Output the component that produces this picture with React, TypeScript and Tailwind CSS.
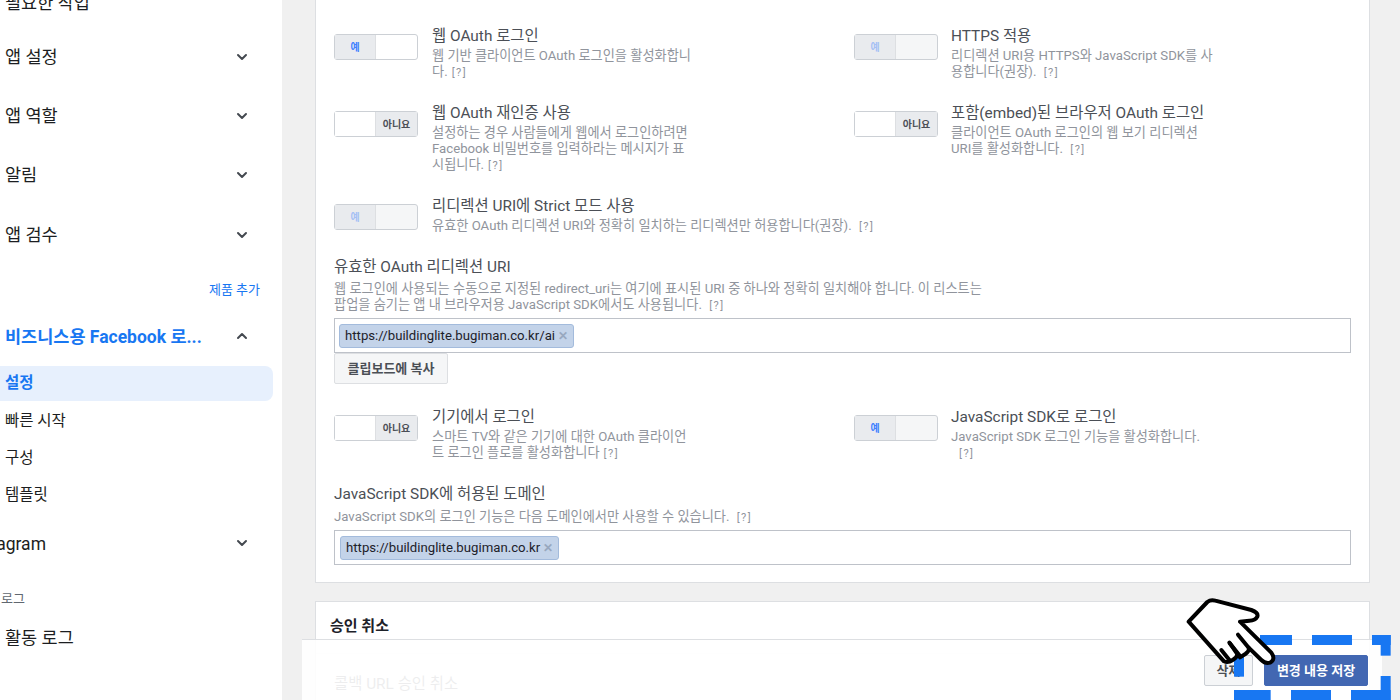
import React from 'react';
import { ChevronDown, ChevronUp } from 'lucide-react';

const font = { fontFamily: 'Roboto, "Noto Sans CJK KR", sans-serif' };

const Help = () => <span className="text-[11px] tracking-[1.5px] text-[#90949c] ml-1">[?]</span>;

const SideRow = ({ label, up, active, h }: { label: string; up?: boolean; active?: boolean; h: string }) => (
  <div className={`flex items-center justify-between pl-[5px] pr-[32px] ${h}`}>
    <span className={active ? 'text-[17.5px] font-bold text-[#1877f2]' : 'text-[17.5px] text-[#1c1e21]'}>{label}</span>
    {up ? (
      <ChevronUp className="w-[16px] h-[16px] mb-[2px] text-[#444950]" strokeWidth={3} />
    ) : (
      <ChevronDown className="w-[16px] h-[16px] mb-[2px] text-[#444950]" strokeWidth={3} />
    )}
  </div>
);

const SubRow = ({ label }: { label: string }) => (
  <div className="h-[37px] flex items-center pl-[5px] text-[15.5px] text-[#1c1e21]">{label}</div>
);

const Toggle = ({ on, disabled, white }: { on: boolean; disabled?: boolean; white?: boolean }) => (
  <div className={`w-[84px] h-[26px] shrink-0 flex border border-[#ccd0d5] rounded-[3px] ${on && !white ? 'bg-[#f5f6f7]' : 'bg-white'}`}>
    {on ? (
      <>
        <div
          className={`w-[41px] flex items-center justify-center text-[10px] font-bold bg-[#e9ebee] border-r border-[#dddfe2] ${
            disabled ? 'text-[#a5c0f5]' : 'text-[#4080ff]'
          }`}
        >
          예
        </div>
        <div className="flex-1" />
      </>
    ) : (
      <>
        <div className="flex-1 bg-white" />
        <div className="w-[42px] flex items-center justify-center text-[10px] font-bold text-[#4b4f56] bg-[#e9ebee] border-l border-[#dddfe2]">
          아니요
        </div>
      </>
    )}
  </div>
);

const Setting = ({
  title,
  on,
  disabled,
  white,
  right,
  children,
  className,
}: {
  title: string;
  on: boolean;
  disabled?: boolean;
  white?: boolean;
  right?: boolean;
  children: React.ReactNode;
  className?: string;
}) => (
  <div className={`flex ${className ?? ''}`}>
    <div className="mt-[8px]">
      <Toggle on={on} disabled={disabled} white={white} />
    </div>
    <div className={`${right ? 'ml-[13px]' : 'ml-[14px]'} whitespace-nowrap`}>
      <div className="text-[15.4px] leading-[18px] text-[#4b4f56] mt-[1px]">{title}</div>
      <div className="text-[13.2px] leading-[16px] text-[#90949c] mt-[3px]">{children}</div>
    </div>
  </div>
);

const Chip = ({ text }: { text: string }) => (
  <span className="inline-flex items-center h-[24px] px-[5px] bg-[#c3d3e9] border border-[#a3bbdc] rounded-[3px] text-[13.2px] text-[#1d2129]">
    {text}
    <span className="ml-[3px] text-[12px] font-bold text-[#98a8bf]">✕</span>
  </span>
);

const App = () => {
  return (
    <div className="h-[700px] w-[1400px] overflow-hidden relative flex bg-[#f0f0f0]" style={font}>
      {/* 사이드바 */}
      <aside className="w-[282px] h-[700px] shrink-0 bg-white overflow-hidden">
        <div className="mt-[-27px]">
          <div className="h-[60px] flex items-center pl-[5px] text-[17.5px] text-[#1c1e21]">필요한 작업</div>
          <SideRow label="앱 설정" h="h-[59px] mt-[-5px]" />
          <SideRow label="앱 역할" h="h-[59px]" />
          <SideRow label="알림" h="h-[59px]" />
          <SideRow label="앱 검수" h="h-[61px]" />
          <div className="h-[32px] mt-[8px] flex items-center justify-end pr-[22px] text-[13px] text-[#1877f2]">제품 추가</div>
          <SideRow label="비즈니스용 Facebook 로..." up active h="h-[46px] mt-[8px]" />
          <div className="h-[35px] mt-[6px] mr-[9px] flex items-center pl-[5px] text-[15.5px] font-bold text-[#1877f2] bg-[#e7f0fd] rounded-r-[8px]">
            설정
          </div>
          <div className="mt-[2px]">
            <SubRow label="빠른 시작" />
            <SubRow label="구성" />
            <SubRow label="템플릿" />
          </div>
          <div className="mt-[5px] h-[50px] flex items-center justify-between pr-[32px]">
            <span className="text-[17.5px] text-[#1c1e21] ml-[-33px]">Instagram</span>
            <ChevronDown className="w-[16px] h-[16px] mb-[2px] text-[#444950]" strokeWidth={3} />
          </div>
          <div className="mt-[22px] h-[16px] flex items-center pl-[1px] text-[13px] text-[#606770]">로그</div>
          <div className="mt-[18px] h-[26px] flex items-center pl-[5px] text-[17.5px] text-[#1c1e21]">활동 로그</div>
        </div>
      </aside>

      {/* 본문 */}
      <main className="flex-1 pl-[33px]">
        <section className="w-[1055px] h-[583px] bg-white border border-t-0 border-[#dddfe2] pl-[18px] pr-[18px] pt-[26px]">
          <div className="grid grid-cols-[520px_1fr]">
            <Setting title="웹 OAuth 로그인" on white className="h-[77px]">
              웹 기반 클라이언트 OAuth 로그인을 활성화합니
              <br />
              다.<Help />
            </Setting>
            <Setting title="HTTPS 적용" on disabled right className="h-[77px]">
              리디렉션 URI용 HTTPS와 JavaScript SDK를 사
              <br />
              용합니다(권장). <Help />
            </Setting>
            <Setting title="웹 OAuth 재인증 사용" on={false} className="h-[93px]">
              설정하는 경우 사람들에게 웹에서 로그인하려면
              <br />
              Facebook 비밀번호를 입력하라는 메시지가 표
              <br />
              시됩니다.<Help />
            </Setting>
            <Setting title="포함(embed)된 브라우저 OAuth 로그인" on={false} right className="h-[93px]">
              클라이언트 OAuth 로그인의 웹 보기 리디렉션
              <br />
              URI를 활성화합니다. <Help />
            </Setting>
          </div>
          <Setting title="리디렉션 URI에 Strict 모드 사용" on disabled className="h-[53px]">
            유효한 OAuth 리디렉션 URI와 정확히 일치하는 리디렉션만 허용합니다(권장). <Help />
          </Setting>

          <div className="text-[15.4px] leading-[18px] text-[#4b4f56] mt-[9px]">유효한 OAuth 리디렉션 URI</div>
          <div className="text-[13.2px] leading-[16px] text-[#90949c] mt-[5px] whitespace-nowrap">
            웹 로그인에 사용되는 수동으로 지정된 redirect_uri는 여기에 표시된 URI 중 하나와 정확히 일치해야 합니다. 이 리스트는
            <br />
            팝업을 숨기는 앱 내 브라우저용 JavaScript SDK에서도 사용됩니다. <Help />
          </div>
          <div className="h-[35px] mt-[4px] border border-[#bec2c9] bg-white flex items-center pl-[4px]">
            <Chip text="https://buildinglite.bugiman.co.kr/ai" />
          </div>
          <button className="block h-[31px] w-[114px] bg-[#f5f6f7] border border-[#dddfe2] rounded-[2px] text-[13px] font-bold text-[#4b4f56]">
            클립보드에 복사
          </button>

          <div className="grid grid-cols-[520px_1fr] mt-[23px]">
            <Setting title="기기에서 로그인" on={false} className="h-[78px]">
              스마트 TV와 같은 기기에 대한 OAuth 클라이언
              <br />
              트 로그인 플로를 활성화합니다<Help />
            </Setting>
            <Setting title="JavaScript SDK로 로그인" on right className="h-[78px]">
              JavaScript SDK 로그인 기능을 활성화합니다.
              <br />
              <span className="ml-[4px]">
                <Help />
              </span>
            </Setting>
          </div>

          <div className="text-[15.4px] leading-[18px] text-[#4b4f56]">JavaScript SDK에 허용된 도메인</div>
          <div className="text-[13.2px] leading-[16px] text-[#90949c] mt-[6px] whitespace-nowrap">
            JavaScript SDK의 로그인 기능은 다음 도메인에서만 사용할 수 있습니다. <Help />
          </div>
          <div className="h-[35px] mt-[4px] border border-[#bec2c9] bg-white flex items-center pl-[5px]">
            <Chip text="https://buildinglite.bugiman.co.kr" />
          </div>
        </section>

        <section className="w-[1055px] h-[200px] mt-[18px] bg-white border border-[#dddfe2] pt-[14px]">
          <div className="pl-[14px] text-[15px] leading-[20px] font-bold text-[#1d2129]">승인 취소</div>
          <div className="mt-[17px] border-t border-[#f0f1f3]" />
          <div className="mt-[19px] pl-[18px] text-[15.4px] text-[#4b4f56]">콜백 URL 승인 취소</div>
        </section>
      </main>

      {/* 하단 저장 바 */}
      <div className="absolute left-[302px] top-[639px] w-[1080px] h-[61px] bg-white/90 border-t border-[#dddfe2] flex justify-end gap-[11px] pt-[15px] pr-[14px]">
        <button className="w-[49px] h-[31px] bg-[#f5f6f7] border border-[#ccd0d5] rounded-[2px] text-[13px] font-bold text-[#4b4f56]">
          삭제
        </button>
        <button className="w-[104px] h-[31px] bg-[#4267b2] border border-[#4267b2] rounded-[2px] text-[13px] font-bold text-white whitespace-nowrap">
          변경 내용 저장
        </button>
      </div>

      {/* 강조 표시 */}
      <svg className="absolute left-[1150px] top-[580px]" width="250" height="120" viewBox="0 0 750 360">
        <g fill="#1877f2">
          <rect x="330" y="165" width="96" height="30" />
          <rect x="486" y="165" width="120" height="30" />
          <rect x="666" y="165" width="56" height="30" />
          <rect x="692" y="165" width="30" height="62" />
          <rect x="692" y="288" width="30" height="72" />
          <rect x="252" y="330" width="110" height="30" />
          <rect x="423" y="330" width="120" height="30" />
          <rect x="603" y="330" width="119" height="30" />
          <rect x="252" y="225" width="30" height="65" />
        </g>
        <path
          d="M116 125 L172 66 Q182 58 196 62 L304 90 Q326 98 322 110 Q316 122 298 122 L270 125 L364 218 Q378 238 360 248 Q346 252 334 240 L296 203 Q300 212 286 222 L270 232 L240 190 L262 222 Q262 232 248 240 Q234 250 222 244 Z"
          fill="white"
          stroke="black"
          strokeWidth="12"
          strokeLinejoin="round"
        />
        <path d="M264 164 L296 203 M238 188 L270 228 M214 210 L240 242" fill="none" stroke="black" strokeWidth="12" strokeLinecap="round" />
      </svg>
    </div>
  );
};

export default App;
